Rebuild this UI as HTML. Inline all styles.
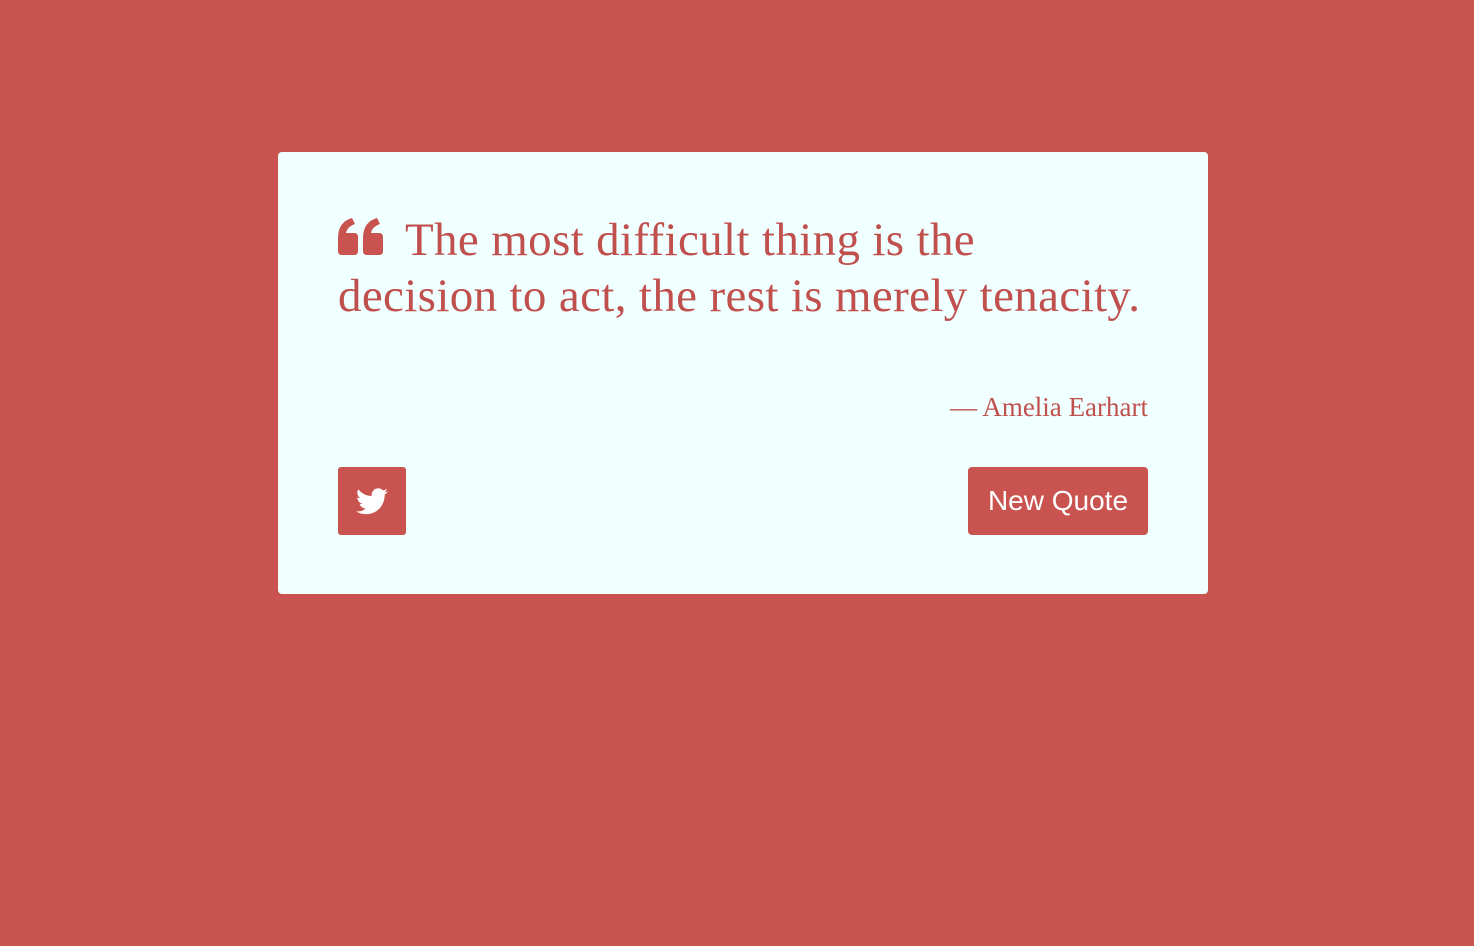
<!DOCTYPE html>
<html><head><style>
html,body{margin:0;padding:0;background:#c8534f;width:1474px;height:946px;overflow:hidden}
.card{position:absolute;left:278px;top:152px;width:930px;height:442px;background:#f0ffff;border-radius:4px}
.q{position:absolute;left:60px;top:60px;width:850px;font-family:"Liberation Serif",serif;font-size:47px;letter-spacing:0.35px;line-height:56px;color:#c0504d;white-space:nowrap}
.q svg{vertical-align:baseline;margin-right:22px}
.a{position:absolute;right:60px;top:240px;font-family:"Liberation Serif",serif;font-size:27px;letter-spacing:0px;color:#c0504d}
.tw{position:absolute;left:60px;top:315px;width:68px;height:68px;background:#c8534f;border-radius:3px}
.nq{position:absolute;right:60px;top:315px;width:180px;height:68px;background:#c8534f;border-radius:4px;color:#fff;font-family:"Liberation Sans",sans-serif;font-size:28px;line-height:68px;text-align:center}
</style></head><body>
<div class="card">
<div class="q"><svg width="45" height="37" viewBox="0 0 45 37"><path fill="#c8534f" d="M0 20 Q0 4 14 0 L17 6 Q9 9 8 15 L16 15 Q20 15 20 19 L20 33 Q20 37 16 37 L4 37 Q0 37 0 33Z M25 20 Q25 4 39 0 L42 6 Q34 9 33 15 L41 15 Q45 15 45 19 L45 33 Q45 37 41 37 L29 37 Q25 37 25 33Z"/></svg>The most difficult thing is the<br>decision to act, the rest is merely tenacity.</div>
<div class="a">— Amelia Earhart</div>
<div class="tw"><svg style="position:absolute;left:18px;top:21px" width="32" height="27" viewBox="0 0 24 20"><path fill="#fff" d="M24 2.4a10 10 0 0 1-2.8.8 5 5 0 0 0 2.1-2.7 10 10 0 0 1-3.1 1.2A4.9 4.9 0 0 0 11.8 6 14 14 0 0 1 1.7.9a4.9 4.9 0 0 0 1.5 6.6 4.9 4.9 0 0 1-2.2-.6 4.9 4.9 0 0 0 3.9 4.9 5 5 0 0 1-2.2.1 4.9 4.9 0 0 0 4.6 3.4A9.9 9.9 0 0 1 0 17.3 14 14 0 0 0 7.5 19.5c9.1 0 14-7.5 14-14v-.6A10 10 0 0 0 24 2.4z"/></svg></div>
<div class="nq">New Quote</div>
</div>
</body></html>
